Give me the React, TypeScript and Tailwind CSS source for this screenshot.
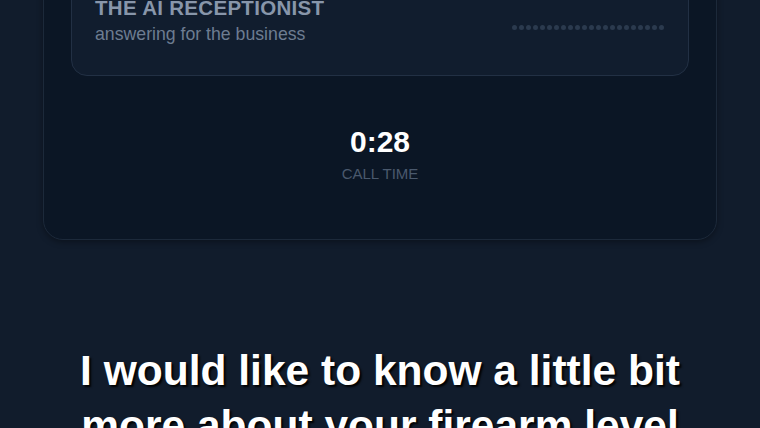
const dots = Array.from({ length: 22 });

export default function App() {
  return (
    <div className="h-[428px] w-[760px] overflow-hidden bg-[#111c2c] font-['Liberation_Sans',Arial,sans-serif]">
      <div className="-mt-[59px] px-[43px]">
        {/* call card */}
        <div className="rounded-[20px] border border-[#1c293a] bg-[#0b1625] px-[27px] pt-[28px] pb-[55px] shadow-[0_2px_6px_rgba(0,0,0,0.35)]">
          <div className="flex items-center justify-between rounded-[16px] border border-[#223044] bg-[#111d2e] pl-[23px] pr-6 pt-6 pb-[29px]">
            <div className="flex flex-col">
              <span className="text-[20.5px] leading-[26px] font-bold tracking-[0.3px] text-[#8896aa]">THE AI RECEPTIONIST</span>
              <span className="mt-[1px] text-[17.7px] leading-[24px] text-[#6d7c91]">answering for the business</span>
            </div>
            <div className="mt-[14px] flex gap-[2px]">
              {dots.map((_, i) => (
                <span key={i} className="h-[5px] w-[5px] rounded-full bg-[#2b3a4e]" />
              ))}
            </div>
          </div>

          <div className="mt-12 flex flex-col items-center">
            <span className="text-[30px] leading-[36px] font-bold text-white">0:28</span>
            <span className="mt-1 text-[15px] leading-[20px] text-[#4a596d]">CALL TIME</span>
          </div>
        </div>
      </div>

      {/* caption */}
      <p className="mt-[103px] px-4 text-center text-[42.5px] leading-[55px] font-bold text-white [text-shadow:2px_2px_2px_rgba(0,0,0,0.95)]">
        I would like to know a little bit
        <br />
        more about your firearm level
      </p>
    </div>
  );
}
